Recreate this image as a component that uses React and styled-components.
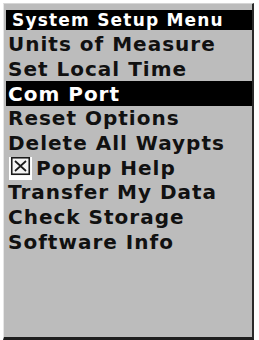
import React from "react";
import styled, { createGlobalStyle } from "styled-components";

const GlobalStyle = createGlobalStyle`
    html,
    body {
        margin: 0;
        padding: 0;
        background: #ffffff;
    }
`;

const items = [
    { label: "Units of Measure" },
    { label: "Set Local Time" },
    { label: "Com Port", selected: true },
    { label: "Reset Options" },
    { label: "Delete All Waypts" },
    { label: "Popup Help", checkbox: true },
    { label: "Transfer My Data" },
    { label: "Check Storage" },
    { label: "Software Info" }
];

const CheckBox = () => (
    <StyledCheck>
        <svg width="23" height="23" viewBox="0 0 23 23">
            <rect x="0" y="0" width="23" height="23" fill="#ffffff" />
            <rect
                x="2.75"
                y="0.75"
                width="17.5"
                height="16.5"
                fill="#f4f4f4"
                stroke="#1a1a1a"
                strokeWidth="1.6"
            />
            <path
                d="M6 4 L17 14 M17 4 L6 14"
                stroke="#1a1a1a"
                strokeWidth="1.7"
                fill="none"
            />
        </svg>
    </StyledCheck>
);

const App = () => {
    return (
        <>
            <GlobalStyle />
            <Screen>
                <Title>System Setup Menu</Title>
                <Menu>
                    {items.map(item => (
                        <Row key={item.label} selected={item.selected}>
                            {item.checkbox && <CheckBox />}
                            <span>{item.label}</span>
                        </Row>
                    ))}
                </Menu>
            </Screen>
        </>
    );
};

const Screen = styled.div`
    box-sizing: border-box;
    margin: 3px 0 0 3px;
    width: 251px;
    height: 337px;
    background-color: #bcbcbc;
    border-top: 1px solid #d6d6d6;
    border-left: 1px solid #e6e6e6;
    border-right: 2px solid #2a2a2a;
    border-bottom: 3px solid #1e1e1e;
    padding: 6px 0 0 2px;
    display: flex;
    flex-direction: column;
    font-family: "DejaVu Sans", "Liberation Sans", sans-serif;
    font-weight: bold;
`;

const Title = styled.div`
    height: 20px;
    background-color: #000;
    color: #fff;
    font-size: 17px;
    letter-spacing: 1.2px;
    line-height: 20px;
    padding-left: 6px;
    white-space: nowrap;
`;

const Menu = styled.div`
    display: flex;
    flex-direction: column;
    margin-top: 2px;
`;

const Row = styled.div.withConfig({
    shouldForwardProp: prop => prop !== "selected"
})`
    display: flex;
    align-items: center;
    height: 24.7px;
    padding-left: 2px;
    font-size: 20px;
    letter-spacing: 1px;
    white-space: nowrap;
    color: ${props => (props.selected ? "#ffffff" : "#111111")};
    background-color: ${props => (props.selected ? "#000000" : "transparent")};
`;

const StyledCheck = styled.span`
    display: flex;
    margin: 2px 4px 0 1px;
`;

export default App;
